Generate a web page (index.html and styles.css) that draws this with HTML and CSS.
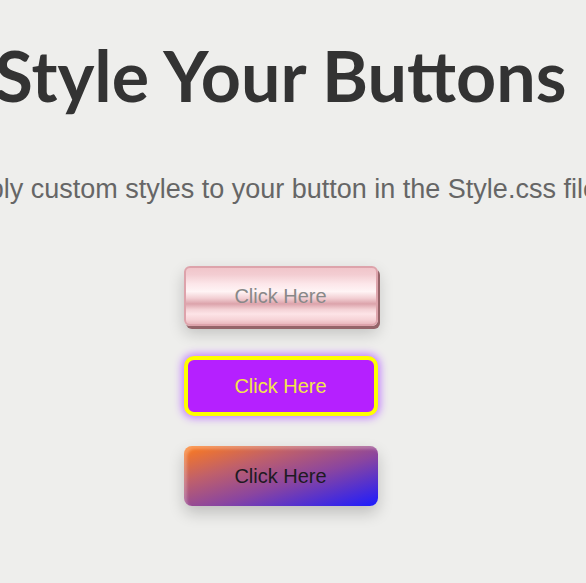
FILE: index.html
```html
<!DOCTYPE html>
<html lang="en">
<head>
<meta charset="utf-8">
<title>Style Your Buttons</title>
<link rel="stylesheet" href="styles.css">
</head>
<body>
<main class="page">
  <h1 class="title">Style Your Buttons</h1>
  <p class="subtitle">Apply custom styles to your button in the Style.css file.</p>
  <div class="buttons">
    <button class="btn btn-metal">Click Here</button>
    <button class="btn btn-neon">Click Here</button>
    <button class="btn btn-gradient">Click Here</button>
  </div>
</main>
</body>
</html>
```

FILE: styles.css
```css
html {
  overflow: hidden;
  background: #eeeeec;
}

body {
  margin: 0;
  padding: 0;
  background: #eeeeec;
}

.page {
  width: 561px;
  padding-bottom: 40px;
  display: flex;
  flex-direction: column;
  align-items: center;
}

.title {
  margin: 33px 0 0;
  font-family: Lato, "Open Sans", sans-serif;
  font-weight: 700;
  font-size: 70px;
  line-height: 84px;
  color: #333333;
  white-space: nowrap;
}

.subtitle {
  margin: 57px 0 0;
  font-family: "Liberation Sans", Arial, sans-serif;
  font-size: 27px;
  line-height: 30px;
  color: #666666;
  white-space: nowrap;
}

.buttons {
  margin-top: 62px;
  display: flex;
  flex-direction: column;
  gap: 30px;
}

.btn {
  width: 194px;
  height: 60px;
  box-sizing: border-box;
  font-family: "Liberation Sans", Arial, sans-serif;
  font-size: 20px;
  cursor: pointer;
  padding: 0;
}

.btn-metal {
  border: 2px solid #dda3ab;
  border-radius: 6px;
  color: #888888;
  background: linear-gradient(to bottom,
    #f0c5ca 0%,
    #f3cdd2 12%,
    #fce6e9 28%,
    #fff4f5 42%,
    #f2cfd3 54%,
    #dca3ab 64%,
    #f4d2d6 74%,
    #fde4e7 82%,
    #f6d3d7 92%,
    #eab8be 100%);
  box-shadow: 2px 3px 0 #956469, 0 7px 16px rgba(0, 0, 0, 0.2);
}

.btn-neon {
  border: 4px solid #ffff00;
  border-radius: 10px;
  color: #f3e64a;
  background: #b520ff;
  box-shadow: 0 0 8px 2px #c07aff;
}

.btn-gradient {
  border: none;
  border-radius: 8px;
  color: #1e1a22;
  background: linear-gradient(to bottom right, #ff7c1a 0%, #c0606a 30%, #8a45a0 58%, #1c1cff 100%);
  box-shadow: inset 3px 3px 3px rgba(255, 255, 255, 0.25), 0 7px 16px rgba(0, 0, 0, 0.2);
}
```
